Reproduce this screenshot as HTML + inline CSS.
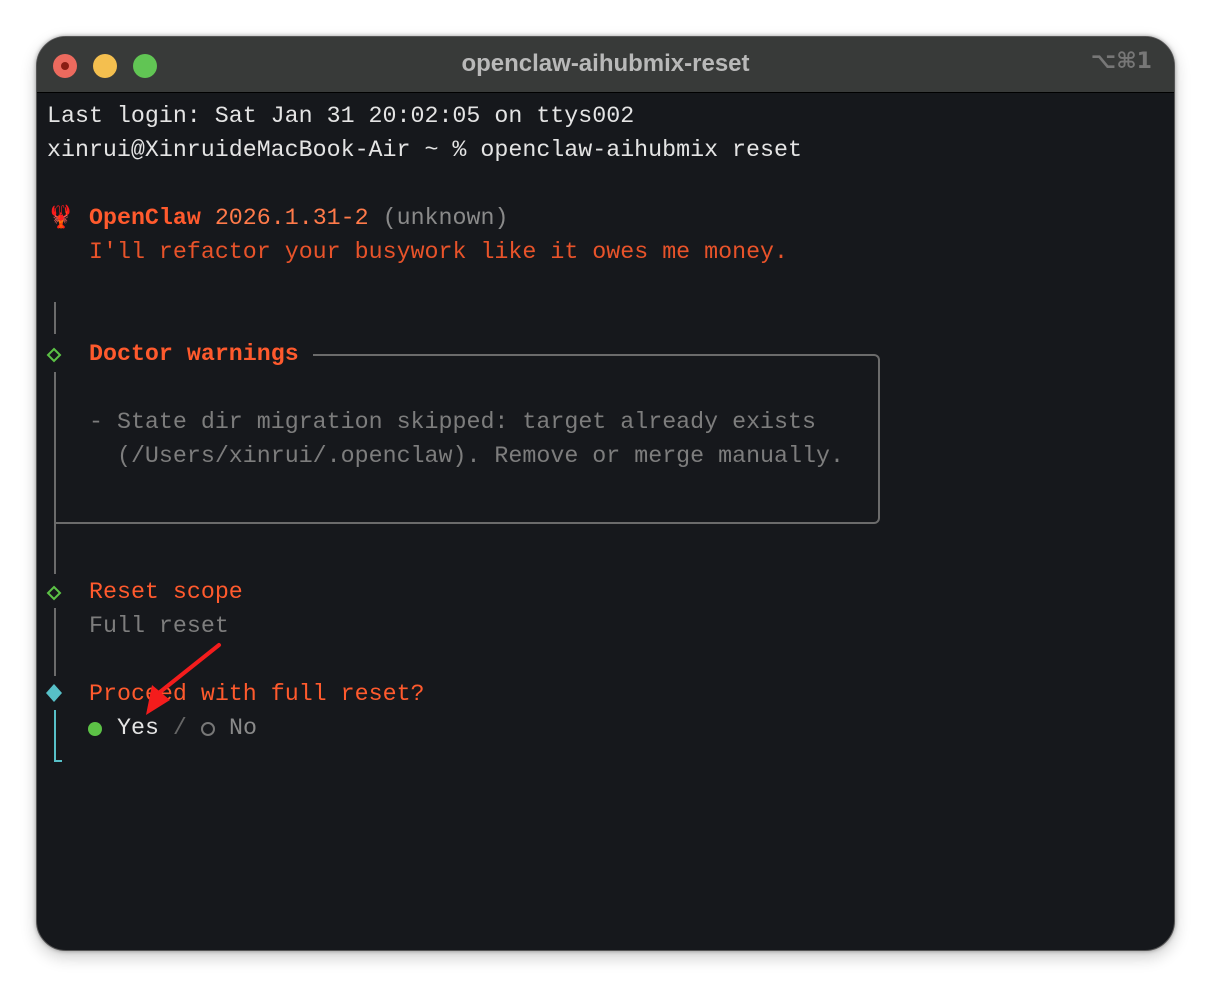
<!DOCTYPE html>
<html><head><meta charset="utf-8"><style>
html,body{margin:0;padding:0;width:1212px;height:988px;background:#fff;overflow:hidden}
.win{position:absolute;left:36px;top:36px;width:1139px;height:915px;border-radius:30px;background:#16181c;overflow:hidden;box-shadow:0 0 4px rgba(0,0,0,.35),0 6px 16px rgba(0,0,0,.2);border:1px solid #555;box-sizing:border-box}
.tb{position:absolute;left:0;top:0;right:0;height:55px;background:#383a39;border-bottom:1px solid #000}
.dot{position:absolute;top:17px;width:24px;height:24px;border-radius:50%}
.title{position:absolute;left:0;right:0;top:13px;text-align:center;font:bold 24px "Liberation Sans",sans-serif;color:#b9b9b9}
.kb{position:absolute;right:22px;top:12px;font:bold 22px "DejaVu Sans",sans-serif;color:#777}
.l{position:absolute;font-family:"Liberation Mono","DejaVu Sans Mono",monospace;font-size:23.3px;white-space:pre;color:#e4e4e4;line-height:34px}
.o{color:#ff5a2d}.ob{color:#ff5a2d;font-weight:bold}.g{color:#8a8a8a}.r{color:#ff7a4a}
.v{position:absolute;width:2px;background:#6b6b6b}
</style></head><body>
<div class="win">
<div class="tb">
<div class="dot" style="left:16px;background:#ec6a5e"><div style="position:absolute;left:8px;top:8px;width:8px;height:8px;border-radius:50%;background:#8a1e14"></div></div>
<div class="dot" style="left:56px;background:#f4bf4f"></div>
<div class="dot" style="left:96px;background:#61c554"></div>
<div class="title">openclaw-aihubmix-reset</div>
<div class="kb">⌥⌘1</div>
</div>
</div>
<div class="l" style="left:47px;top:99px">Last login: Sat Jan 31 20:02:05 on ttys002</div>
<div class="l" style="left:47px;top:133px">xinrui@XinruideMacBook-Air ~ % openclaw-aihubmix reset</div>
<div class="l" style="left:47px;top:201px"><span style="font-family:'DejaVu Sans',sans-serif;font-size:22px;color:#e0452a">🦞</span></div>
<div class="l" style="left:89px;top:201px"><span class="ob">OpenClaw</span> <span class="r">2026.1.31-2</span> <span class="g">(unknown)</span></div>
<div class="l o" style="left:89px;top:235px;color:#e8532a">I'll refactor your busywork like it owes me money.</div>
<div class="v" style="left:54px;top:302px;height:32px"></div>
<svg style="position:absolute;left:46px;top:347px" width="16" height="16"><path d="M8 2 L14 8 L8 14 L2 8 Z" fill="none" stroke="#5cc246" stroke-width="2"/></svg>
<div class="l ob" style="left:89px;top:337px">Doctor warnings</div>
<div style="position:absolute;left:313px;top:354px;width:567px;height:170px;border-top:2px solid #6b6b6b;border-right:2px solid #6b6b6b;border-bottom:2px solid #6b6b6b;border-radius:0 6px 6px 0;box-sizing:border-box"></div>
<div style="position:absolute;left:56px;top:522px;width:260px;height:2px;background:#6b6b6b"></div>
<div class="v" style="left:54px;top:372px;height:202px"></div>
<div class="l g" style="left:89px;top:405px;color:#7d7d7d">- State dir migration skipped: target already exists</div>
<div class="l g" style="left:89px;top:439px;color:#7d7d7d">  (/Users/xinrui/.openclaw). Remove or merge manually.</div>
<svg style="position:absolute;left:46px;top:585px" width="16" height="16"><path d="M8 2 L14 8 L8 14 L2 8 Z" fill="none" stroke="#5cc246" stroke-width="2"/></svg>
<div class="l o" style="left:89px;top:575px">Reset scope</div>
<div class="v" style="left:54px;top:608px;height:68px"></div>
<div class="l g" style="left:89px;top:609px;color:#7d7d7d">Full reset</div>
<svg style="position:absolute;left:45px;top:683px" width="18" height="20"><path d="M9 1 L17 10 L9 19 L1 10 Z" fill="#57c0c8"/></svg>
<div class="l o" style="left:89px;top:677px">Proceed with full reset?</div>
<div style="position:absolute;left:54px;top:710px;width:8px;height:52px;border-left:2px solid #57c0c8;border-bottom:2px solid #57c0c8;box-sizing:border-box"></div>
<div style="position:absolute;left:88px;top:722px;width:14px;height:14px;border-radius:50%;background:#5cc246"></div>
<div class="l" style="left:117px;top:711px">Yes <span class="g" style="color:#666">/</span></div>
<div style="position:absolute;left:201px;top:722px;width:14px;height:14px;border-radius:50%;border:2px solid #777;box-sizing:border-box"></div>
<div class="l g" style="left:229px;top:711px">No</div>
<svg style="position:absolute;left:0;top:0" width="1212" height="988"><path d="M219 645 L160 692" stroke="#f41c1c" stroke-width="4" stroke-linecap="round"/><path d="M146 715 L152 685 L170 700 Z" fill="#f41c1c"/></svg>
</body></html>
